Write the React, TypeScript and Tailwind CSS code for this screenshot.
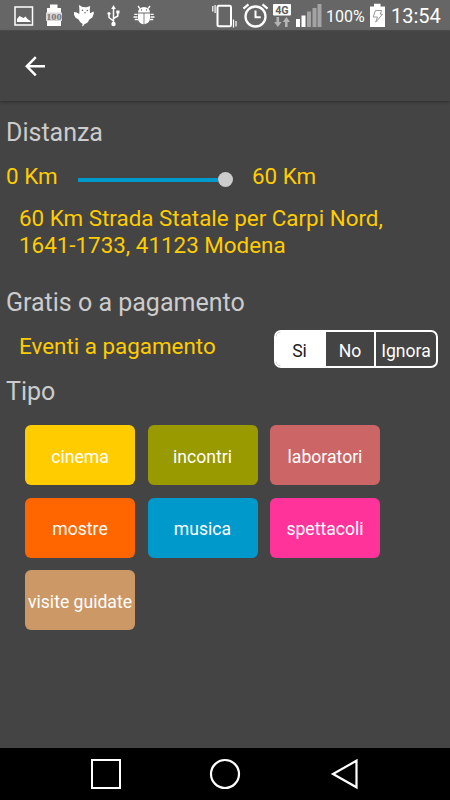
import { useState } from 'react';

const tipi = [
  { label: 'cinema', color: 'bg-[#ffcc00]' },
  { label: 'incontri', color: 'bg-[#999900]' },
  { label: 'laboratori', color: 'bg-[#cc6666]' },
  { label: 'mostre', color: 'bg-[#ff6600]' },
  { label: 'musica', color: 'bg-[#0099cc]' },
  { label: 'spettacoli', color: 'bg-[#ff3399]' },
  { label: 'visite guidate', color: 'bg-[#cc9966]' },
];

const scelte = [
  { label: 'Si', width: 'w-[50px] pr-[3px]' },
  { label: 'No', width: 'w-[50px] border-r-2 border-white' },
  { label: 'Ignora', width: 'w-[60px]' },
];

function StatusBar() {
  return (
    <header className="flex h-[31px] shrink-0 items-start border-b border-[#505050] bg-[#666666] pl-3.5 text-white">
      {/* Notifications */}
      <svg className="h-[31px] w-5 shrink-0" viewBox="14 0 20 31">
        <rect x="15" y="7" width="17.5" height="18" fill="none" stroke="#fff" strokeWidth="1.5" />
        <path d="M17 22v-3l2.5-3 2 1 2 1 2-1.5 2 2.5 3 2v1z" fill="#fff" />
      </svg>
      <svg className="ml-3 h-[31px] w-4 shrink-0" viewBox="46 0 16 31">
        <path d="M50 4.5h7.500V8H61v18H47V8h3z" fill="#fff" />
        <path d="M46 12.500h16v8.500H46z" fill="#d8d8d8" />
        <text x="46.200" y="19.800" fontSize="9" fontWeight="700" fill="#777" textLength="15.500" lengthAdjust="spacingAndGlyphs" fontFamily="Liberation Serif, serif">100</text>
      </svg>
      <svg className="ml-3 h-[31px] w-5 shrink-0" viewBox="74 0 20 31">
        <path
          d="M79 5l3.500 2 4 .2L90.200 6l-.4 3.500.2 3.800 3.500-1.800.4 1.700-1.600 4.300-3.200 2.300-1.200 2.400-2 1.300-1.500.7-1.400 2-.9-.2.500-2-2.500-2-1.500-2.600-3-1.600-1.800-3.300.3-2.500 2.600.5 2.600 1.500.1-4.500z"
          fill="#fff"
        />
        <circle cx="82.500" cy="10.300" r=".8" fill="#666" />
        <circle cx="87.300" cy="10.500" r=".8" fill="#666" />
        <path d="M84 12.200h2l-1 1.500z" fill="#666" />
      </svg>
      <svg className="ml-3 h-[31px] w-3.5 shrink-0" viewBox="106 0 14 31">
        <path d="M113.500 8v14M113.500 21l-4.500-3.500V14M113.500 18.500l4.300-2.500v-4" fill="none" stroke="#fff" strokeWidth="1.500" />
        <path d="M113.500 5l2.300 4h-4.600z" fill="#fff" />
        <circle cx="109" cy="13.500" r="1.600" fill="#fff" />
        <path d="M116.300 10.500h3.200v3h-3.200z" fill="#fff" />
        <circle cx="113.500" cy="24" r="2.200" fill="#fff" />
      </svg>
      <svg className="ml-3 h-[31px] w-6 shrink-0" viewBox="132 0 24 31">
        <path d="M138 12.500a6 5.500 0 0 1 12 0z" fill="#fff" />
        <path d="M138 13.500h5.600v10.700c-4-.6-5.600-3.100-5.600-6zM144.400 13.500h5.600V18c0 3-1.500 5.500-5.600 6.200z" fill="#fff" />
        <path
          d="M139.800 8.500l-1.800-2.500M148.200 8.500L150 6M137.500 14.300h-3.200M137.500 17h-4M138 19.500h-3.200M150.500 14.300h3.200M150.500 17h4M150 19.500h3.200"
          fill="none"
          stroke="#fff"
          strokeWidth="1.300"
        />
        <circle cx="141.500" cy="10" r=".7" fill="#666" />
        <circle cx="146.500" cy="10" r=".7" fill="#666" />
      </svg>

      {/* System */}
      <svg className="ml-[55px] h-[31px] w-7 shrink-0" viewBox="211 0 28 31">
        <rect x="217.500" y="5.700" width="13.500" height="20.500" rx="1.500" fill="none" stroke="#fff" strokeWidth="2" />
        <path d="M212.800 6v5.500M215.100 5v8M233.500 19.500v8M236 21v5.500" stroke="#fff" strokeWidth="1.200" />
      </svg>
      <svg className="ml-[3px] h-[31px] w-7 shrink-0" viewBox="242 0 28 31">
        <circle cx="255.500" cy="16.500" r="10" fill="none" stroke="#fff" strokeWidth="2.300" />
        <path d="M255.500 10.500v6.800h5.200" fill="none" stroke="#fff" strokeWidth="2" />
        <path d="M243.400 8.700l5.100-4.300M262.500 4.400l5.100 4.300" stroke="#fff" strokeWidth="2.200" />
      </svg>
      <svg className="ml-[3px] h-[31px] w-[19px] shrink-0" viewBox="273 0 19 31">
        <rect x="273" y="4" width="18" height="11.500" rx="1" fill="#fff" />
        <text x="275.200" y="13.500" fontSize="10.500" fontWeight="700" fill="#606060" textLength="13.500" lengthAdjust="spacingAndGlyphs" fontFamily="Roboto, sans-serif">4G</text>
        <path d="M276.500 17h2.600v5h2.400l-3.600 5-3.700-5h2.300zM285 27h2.600v-5h2.500l-3.700-5-3.600 5h2.200z" fill="#b4b4b4" />
      </svg>
      <svg className="ml-1 h-[31px] w-[26px] shrink-0" viewBox="296 0 26 31">
        <path d="M296 19h4v8h-4zM301.500 15.500h4V27h-4z" fill="#fff" />
        <path d="M307 11.500h4V27h-4zM312.500 8h4v19h-4zM317.500 4h4v23h-4z" fill="#a3a3a3" />
      </svg>
      <span className="ml-1 w-[40px] shrink-0 text-[16px] leading-[33px]">100%</span>
      <svg className="ml-1 h-[31px] w-4 shrink-0" viewBox="370 0 16 31">
        <path d="M374 3.700h6.500v2.800h4.500V27h-15V6.500h4z" fill="#fff" />
        <path d="M375.500 10.500h6l-1.200 3.700h2.200l-6.800 8 1.800-5.200h-4.300z" fill="none" stroke="#999" strokeWidth="1" />
      </svg>
      <span className="ml-[5px] text-[20px] leading-[33px]">13:54</span>
    </header>
  );
}

function Toolbar() {
  return (
    <div className="flex h-[70px] shrink-0 items-center pl-[25px] shadow-[0_1px_3px_rgba(0,0,0,0.35)]">
      <button aria-label="Indietro">
        <svg className="h-[22px] w-[22px]" viewBox="0 0 22 22" fill="none" stroke="#fff" strokeWidth="2.500">
          <path d="M20 11.300H2M10.800 2.200l-9 9.100 9 9.100" />
        </svg>
      </button>
    </div>
  );
}

function NavBar() {
  return (
    <nav className="flex h-[52px] shrink-0 items-center justify-between bg-black pr-[92px] pl-[91px]">
      <svg className="h-8 w-8" viewBox="0 0 32 32" fill="none" stroke="#fff" strokeWidth="2">
        <rect x="1" y="2" width="28" height="28" />
      </svg>
      <svg className="h-8 w-8" viewBox="0 0 32 32" fill="none" stroke="#fff" strokeWidth="2.200">
        <circle cx="16" cy="16" r="14" />
      </svg>
      <svg className="h-8 w-8" viewBox="0 0 32 32" fill="none" stroke="#fff" strokeWidth="2.200">
        <path d="M30.500 2.700v26.600L7 16z" />
      </svg>
    </nav>
  );
}

export default function App() {
  const [scelta, setScelta] = useState('Si');

  return (
    <div className="flex h-[800px] w-[450px] flex-col overflow-hidden bg-[#444444] font-['Roboto',sans-serif]">
      <StatusBar />
      <Toolbar />

      <main className="flex-1 text-[22.4px] text-[#ffcc00]">
        {/* Distance */}
        <h2 className="mt-[17px] pl-1.5 text-[25px] leading-[30px] text-[#cccccc]">Distanza</h2>
        <div className="mt-[14px] flex h-7 items-center pl-1.5 leading-7">
          <span className="w-[72px]">0 Km</span>
          <div className="mt-[7px] flex w-[155px] items-center">
            <div className="h-1 flex-1 bg-[#0099cc]" />
            <div className="h-[15px] w-[15px] rounded-full bg-[#cccccc]" />
          </div>
          <span className="ml-[19px]">60 Km</span>
        </div>
        <p className="mt-[15px] pl-[19px] leading-[26.500px]">
          60 Km Strada Statale per Carpi Nord,
          <br />
          1641-1733, 41123 Modena
        </p>

        {/* Free or paid */}
        <h2 className="mt-[30px] pl-1.5 text-[25px] leading-[30px] text-[#cccccc]">Gratis o a pagamento</h2>
        <div className="mt-[11.5px] flex h-[39px] items-center justify-between pr-3 pl-[19px]">
          <span className="-mt-[7px] leading-7">Eventi a pagamento</span>
          <div className="flex h-[38px] overflow-hidden rounded-[7px] border-2 border-white text-[17.6px]">
            {scelte.map(({ label, width }) => (
              <button
                key={label}
                onClick={() => setScelta(label)}
                className={`${width} pt-[5px] ${scelta === label ? 'bg-white text-[#222222]' : 'text-white'}`}
              >
                {label}
              </button>
            ))}
          </div>
        </div>

        {/* Event types */}
        <h2 className="mt-[8.5px] pl-1.5 text-[25px] leading-[30px] text-[#cccccc]">Tipo</h2>
        <div className="mt-[18px] flex flex-wrap gap-[12.5px] pr-[60px] pl-[25px] text-[17.6px] text-white">
          {tipi.map(({ label, color }) => (
            <button key={label} className={`${color} h-[60px] w-[110px] rounded-md pt-1 whitespace-nowrap`}>
              {label}
            </button>
          ))}
        </div>
      </main>

      <NavBar />
    </div>
  );
}
